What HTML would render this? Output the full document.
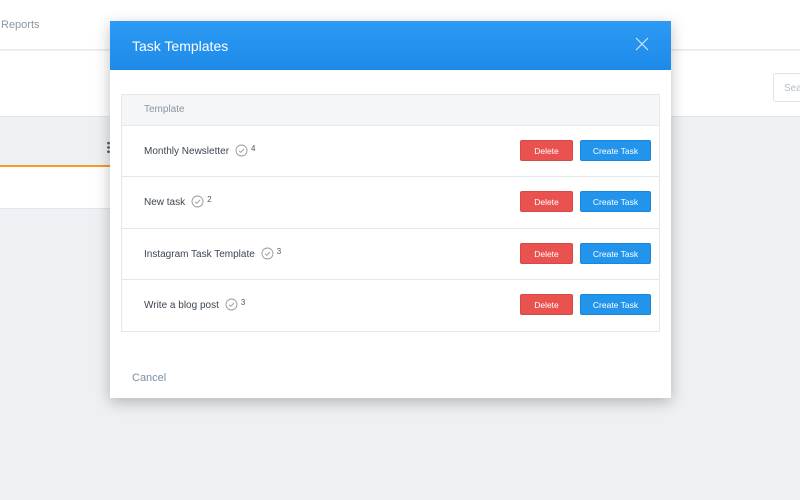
<!DOCTYPE html>
<html><head><style>
*{margin:0;padding:0;box-sizing:border-box}
body{width:800px;height:500px;overflow:hidden;background:#eef1f4;font-family:"Liberation Sans",sans-serif;position:relative}
.top{position:absolute;left:0;top:0;width:800px;height:50px;background:#fff;border-bottom:1px solid #e6e9ed}
.sub{position:absolute;left:0;top:51px;width:800px;height:66px;background:#fff;border-bottom:1px solid #e2e6ea}
.rep{position:absolute;left:1px;top:19px;font-size:11px;color:#8a96a3}
.search{position:absolute;left:773px;top:73px;width:40px;height:29px;border:1px solid #e0e4e8;border-radius:3px;font-size:10px;color:#b5bec7;padding:9px 0 0 10px}
.card{position:absolute;left:0;top:165px;width:115px;height:44px;background:#fff;border-top:2px solid #f59a23;border-bottom:1px solid #e2e6ea}
.dots{position:absolute;left:107px;top:141px;width:3px;height:13px;background:radial-gradient(circle,#555 1.2px,transparent 1.5px) 0 0/3px 4.3px}
.modal{position:absolute;left:110px;top:21px;width:561px;height:377px;background:#fff;box-shadow:0 4px 14px rgba(0,0,0,.25)}
.mh{height:49px;background:linear-gradient(#2b9bf4,#1e8ae8);color:#fff;font-size:14px;padding:17px 0 0 22px;position:relative}
.x{position:absolute;right:22px;top:16px;width:14px;height:14px}
.tbl{position:absolute;left:11px;top:73px;width:539px;border:1px solid #e3e8ee}
.th{height:31px;background:#f4f6f8;border-bottom:1px solid #e3e8ee;font-size:10px;color:#8b96a2;padding:9px 0 0 22px}
.row{height:51.3px;border-bottom:1px solid #e3e8ee;position:relative;font-size:10px;color:#3c4650}
.row:last-child{border-bottom:none}
.nm{position:absolute;left:22px;top:18px}
.ck{display:inline-block;vertical-align:-3px;margin-left:6px}
.n{font-size:8px;color:#555;vertical-align:3px;margin-left:3px}
.del{position:absolute;left:398px;top:14px;width:53px;height:21px;background:#e9524f;border:1px solid #d44a47;border-radius:2px;color:#fff;font-size:8.5px;text-align:center;line-height:20px}
.ct{position:absolute;left:458px;top:14px;width:71px;height:21px;background:#2394ec;border:1px solid #1a86dc;border-radius:2px;color:#fff;font-size:8.5px;text-align:center;line-height:20px}
.cancel{position:absolute;left:22px;top:351px;font-size:11px;color:#7d8fa6}
</style></head><body>
<div class="top"><div class="rep">Reports</div></div>
<div class="sub"></div>
<div class="search">Sea</div>
<div class="card"></div>
<div class="dots"></div>
<div class="modal">
<div class="mh">Task Templates<svg class="x" viewBox="0 0 14 14"><path d="M1 1L13 13M13 1L1 13" stroke="#cfe6fb" stroke-width="1.2"/></svg></div>
<div class="tbl">
<div class="th">Template</div>
<div class="row"><div class="nm">Monthly Newsletter<svg class="ck" width="13" height="13" viewBox="0 0 13 13"><circle cx="6.5" cy="6.5" r="5.5" fill="none" stroke="#999" stroke-width=".9"/><path d="M4 6.7L5.8 8.4L9 4.9" fill="none" stroke="#999" stroke-width=".9"/></svg><span class="n">4</span></div><div class="del">Delete</div><div class="ct">Create Task</div></div>
<div class="row"><div class="nm">New task<svg class="ck" width="13" height="13" viewBox="0 0 13 13"><circle cx="6.5" cy="6.5" r="5.5" fill="none" stroke="#999" stroke-width=".9"/><path d="M4 6.7L5.8 8.4L9 4.9" fill="none" stroke="#999" stroke-width=".9"/></svg><span class="n">2</span></div><div class="del">Delete</div><div class="ct">Create Task</div></div>
<div class="row"><div class="nm">Instagram Task Template<svg class="ck" width="13" height="13" viewBox="0 0 13 13"><circle cx="6.5" cy="6.5" r="5.5" fill="none" stroke="#999" stroke-width=".9"/><path d="M4 6.7L5.8 8.4L9 4.9" fill="none" stroke="#999" stroke-width=".9"/></svg><span class="n">3</span></div><div class="del">Delete</div><div class="ct">Create Task</div></div>
<div class="row"><div class="nm">Write a blog post<svg class="ck" width="13" height="13" viewBox="0 0 13 13"><circle cx="6.5" cy="6.5" r="5.5" fill="none" stroke="#999" stroke-width=".9"/><path d="M4 6.7L5.8 8.4L9 4.9" fill="none" stroke="#999" stroke-width=".9"/></svg><span class="n">3</span></div><div class="del">Delete</div><div class="ct">Create Task</div></div>
</div>
<div class="cancel">Cancel</div>
</div>
</body></html>
